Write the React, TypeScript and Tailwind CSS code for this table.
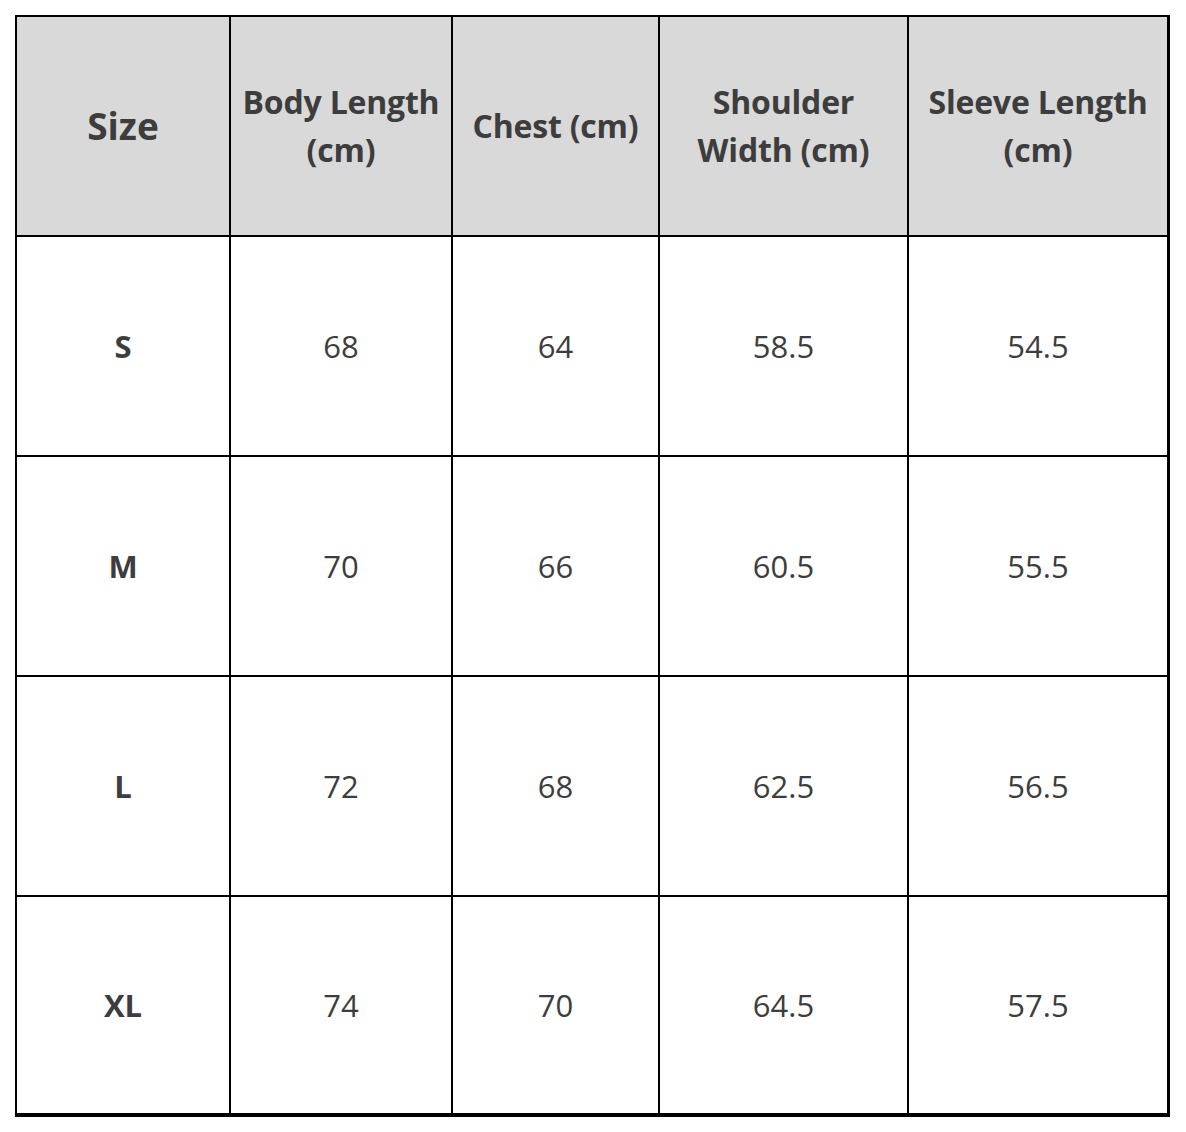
const headers: [string, string | null][] = [
  ["Body Length", "(cm)"],
  ["Chest (cm)", null],
  ["Shoulder", "Width (cm)"],
  ["Sleeve Length", "(cm)"],
];

const rows = [
  { size: "S", values: ["68", "64", "58.5", "54.5"] },
  { size: "M", values: ["70", "66", "60.5", "55.5"] },
  { size: "L", values: ["72", "68", "62.5", "56.5"] },
  { size: "XL", values: ["74", "70", "64.5", "57.5"] },
];

const colWidths = ["w-[214px]", "w-[222px]", "w-[207px]", "w-[249px]", "w-[258px]"];

export default function App() {
  return (
    <div className="min-h-[1132px] bg-white pt-[15px] pl-[15px] font-['Open_Sans',sans-serif] text-[#3d3d3d]">
      <div className="inline-flex flex-col border-t-2 border-l-2 border-r-[3px] border-b-[4px] border-black">
        {/* Header */}
        <div className="flex h-[220px] bg-[#d9d9d9] border-b-2 border-black">
          <div className={`${colWidths[0]} flex items-center justify-center border-r-2 border-black text-[37px] font-bold`}>
            Size
          </div>
          {headers.map(([a, b], i) => (
            <div
              key={a}
              className={`${colWidths[i + 1]} flex items-center justify-center text-center text-[32px] leading-[48px] font-bold tracking-[-0.2px] ${
                i < headers.length - 1 ? "border-r-2 border-black" : ""
              }`}
            >
              <span className="whitespace-nowrap">
                {a}
                {b && (
                  <>
                    <br />
                    {b}
                  </>
                )}
              </span>
            </div>
          ))}
        </div>

        {/* Body rows */}
        {rows.map((row, r) => (
          <div
            key={row.size}
            className={`flex ${r < rows.length - 1 ? "h-[220px] border-b-2 border-black" : "h-[216px]"}`}
          >
            <div className={`${colWidths[0]} flex items-center justify-center border-r-2 border-black text-[31px] font-bold`}>
              {row.size}
            </div>
            {row.values.map((v, i) => (
              <div
                key={i}
                className={`${colWidths[i + 1]} flex items-center justify-center text-[31px] ${
                  i < row.values.length - 1 ? "border-r-2 border-black" : ""
                }`}
              >
                {v}
              </div>
            ))}
          </div>
        ))}
      </div>
    </div>
  );
}
